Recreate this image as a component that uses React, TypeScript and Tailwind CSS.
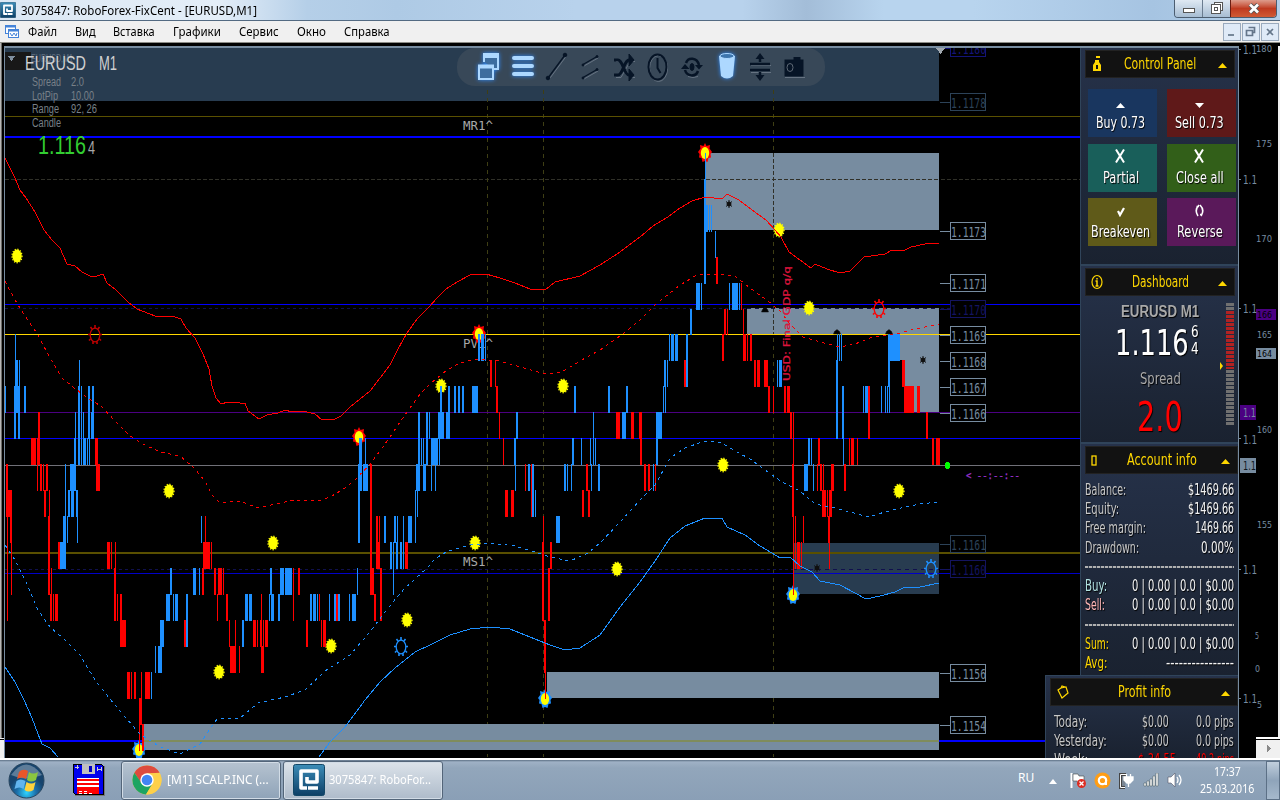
import { useLayoutEffect, useRef, useState } from 'react';
import type { ReactNode } from 'react';

type Candle = [x: number, w: number, top: number, bottom: number];
type Point = [number, number];

const BLUE = '#1e90ff';
const RED = '#ff0000';
const STEEL = '#778ca0';
const NAVY = '#10104e';
const DARK = '#283c50';

// top / bottom are the last two digits of the price (1.11xx)
const UP: Candle[] = [
  [5, 1, 67, 66], [15, 1, 69, 65], [14, 2, 67, 65], [16, 2, 68, 66], [18, 2, 67, 65], [19, 1, 68, 66], [24, 2, 67, 66],
  [78, 2, 67, 64], [79, 1, 68, 67], [81, 1, 67, 64], [88, 2, 67, 65], [92, 2, 67, 65], [91, 1, 66, 65], [75, 1, 66, 65],
  [74, 2, 65, 64], [83, 1, 66, 64], [83, 3, 65, 64], [87, 1, 65, 64], [89, 1, 65, 64], [65, 1, 64, 62], [70, 6, 64, 63],
  [68, 2, 63, 62], [71, 3, 63, 62], [76, 2, 63, 62], [63, 3, 62, 61], [60, 6, 61, 60], [67, 1, 62, 61], [77, 1, 62, 61],
  [151, 1, 56, 55], [155, 1, 57, 56], [158, 4, 57, 56], [160, 4, 58, 57], [166, 4, 59, 58], [170, 2, 60, 59],
  [173, 1, 59, 58], [175, 3, 59, 58], [186, 2, 59, 57], [193, 3, 60, 59], [199, 1, 60, 59], [201, 1, 62, 61],
  [242, 2, 58, 57], [245, 3, 59, 58], [249, 3, 59, 58], [270, 2, 60, 59], [269, 1, 59, 58], [271, 3, 59, 58],
  [278, 2, 59, 58], [280, 4, 60, 59], [285, 7, 60, 59], [310, 2, 59, 58], [313, 3, 59, 58], [317, 1, 59, 58],
  [329, 1, 59, 58], [334, 2, 59, 58], [338, 2, 59, 58], [349, 1, 59, 58], [352, 4, 59, 58], [357, 1, 60, 59],
  [358, 2, 64, 61], [359, 3, 65, 64], [365, 1, 65, 64], [358, 4, 64, 63], [363, 5, 64, 63], [384, 2, 62, 61],
  [394, 2, 62, 61], [397, 1, 62, 61], [403, 1, 62, 60], [408, 4, 62, 61], [390, 2, 61, 60], [393, 1, 61, 59],
  [396, 2, 61, 60], [400, 2, 61, 60], [415, 1, 63, 61], [417, 1, 63, 62], [416, 4, 64, 63], [418, 2, 66, 64],
  [421, 1, 65, 64], [423, 1, 65, 64], [423, 3, 64, 63], [426, 2, 66, 64], [429, 1, 66, 65], [431, 7, 65, 64],
  [431, 1, 64, 63], [435, 1, 64, 63], [439, 1, 65, 64], [438, 6, 66, 65], [440, 2, 67, 66], [446, 4, 66, 65],
  [448, 2, 67, 66], [454, 2, 67, 66], [458, 2, 67, 66], [462, 2, 67, 66], [472, 6, 67, 66], [478, 2, 69, 68],
  [481, 3, 69, 68], [485, 1, 69, 68], [516, 2, 66, 65], [514, 2, 65, 64], [515, 1, 64, 63], [528, 2, 64, 63],
  [532, 2, 64, 62], [535, 1, 63, 62], [556, 4, 62, 61], [564, 2, 64, 63], [567, 1, 64, 63], [571, 1, 64, 63],
  [572, 2, 65, 64], [574, 2, 67, 66], [581, 1, 65, 64], [590, 1, 65, 64], [591, 1, 64, 63], [593, 1, 66, 64],
  [595, 1, 65, 64], [598, 2, 64, 63], [608, 2, 67, 66], [622, 4, 66, 65], [626, 2, 67, 66], [653, 1, 64, 63],
  [656, 6, 66, 65], [656, 2, 65, 64], [663, 1, 67, 66], [665, 1, 67, 66], [664, 2, 68, 67], [667, 1, 68, 67],
  [669, 1, 69, 68], [671, 3, 69, 68], [675, 3, 69, 68], [686, 2, 69, 67], [690, 2, 70, 69], [696, 4, 71, 70],
  [701, 1, 71, 70], [704, 2, 75, 71], [705, 1, 76, 75], [706, 2, 74, 73], [709, 1, 74, 73], [711, 1, 74, 73],
  [715, 1, 73, 72], [729, 1, 71, 70], [732, 6, 71, 70], [739, 1, 71, 70], [777, 1, 68, 67], [779, 3, 68, 67],
  [804, 4, 64, 63], [808, 2, 65, 64], [811, 1, 65, 64], [813, 1, 64, 63], [836, 2, 68, 65], [837, 1, 69, 68],
  [839, 1, 69, 68], [841, 1, 69, 68], [842, 2, 67, 65], [843, 1, 65, 64], [863, 1, 67, 66], [865, 3, 67, 66],
  [881, 1, 67, 66], [885, 1, 67, 66], [887, 1, 67, 66], [889, 1, 67, 66], [888, 2, 68, 67], [888, 12, 69, 68],
];

const DOWN: Candle[] = [
  [31, 5, 65, 64], [38, 2, 66, 64], [37, 1, 65, 63], [40, 2, 64, 63], [43, 1, 64, 63], [46, 2, 64, 63], [44, 2, 63, 62],
  [49, 1, 63, 62], [95, 3, 65, 64], [96, 4, 64, 63], [6, 2, 64, 62], [8, 4, 63, 62], [7, 1, 62, 58], [10, 2, 62, 61],
  [11, 1, 61, 59], [48, 2, 62, 59], [51, 1, 60, 59], [50, 2, 59, 58], [53, 1, 59, 58], [55, 3, 59, 58], [58, 2, 61, 60],
  [107, 3, 61, 60], [111, 1, 61, 60], [115, 1, 61, 60], [114, 2, 60, 58], [117, 1, 59, 58], [120, 2, 59, 58],
  [120, 6, 58, 57], [127, 3, 56, 55], [131, 1, 56, 55], [134, 2, 56, 55], [141, 1, 56, 55], [145, 5, 56, 55],
  [139, 3, 55, 54], [139, 1, 54, 53], [142, 2, 54, 53], [184, 2, 58, 57], [205, 1, 62, 61], [203, 7, 61, 60],
  [211, 1, 61, 60], [202, 2, 60, 59], [214, 2, 60, 59], [218, 4, 60, 59], [223, 1, 60, 59], [217, 1, 59, 58],
  [226, 2, 59, 58], [229, 1, 58, 57], [235, 1, 58, 57], [230, 6, 57, 56], [239, 1, 57, 56], [253, 3, 58, 57],
  [257, 1, 58, 57], [260, 2, 58, 57], [261, 1, 59, 58], [263, 1, 58, 57], [265, 3, 58, 57], [261, 3, 57, 56],
  [293, 1, 60, 58], [298, 2, 60, 59], [306, 2, 58, 57], [319, 1, 59, 58], [321, 1, 58, 57], [323, 3, 58, 57],
  [336, 2, 59, 58], [370, 2, 64, 59], [372, 2, 60, 59], [374, 2, 59, 58], [376, 2, 62, 60], [379, 1, 62, 61],
  [378, 2, 61, 60], [380, 2, 60, 58], [405, 3, 61, 60], [490, 2, 68, 67], [495, 1, 68, 67], [496, 2, 67, 66],
  [499, 1, 66, 65], [503, 1, 65, 64], [505, 3, 63, 62], [511, 3, 63, 62], [525, 1, 64, 63], [531, 1, 64, 62],
  [543, 1, 62, 61], [542, 2, 61, 58], [544, 2, 58, 56], [545, 1, 56, 55], [550, 2, 61, 60], [548, 2, 60, 58],
  [586, 2, 64, 63], [582, 2, 63, 62], [588, 2, 63, 62], [616, 4, 66, 65], [631, 3, 66, 65], [639, 3, 66, 65],
  [640, 2, 65, 64], [644, 2, 64, 63], [648, 2, 64, 63], [655, 1, 64, 63], [684, 2, 68, 67], [716, 2, 72, 71],
  [741, 1, 71, 70], [724, 2, 70, 69], [727, 1, 70, 69], [722, 2, 69, 68], [743, 1, 70, 69], [743, 3, 69, 68],
  [747, 1, 69, 68], [750, 2, 69, 68], [754, 2, 68, 67], [757, 3, 68, 67], [764, 4, 68, 67], [768, 2, 67, 66],
  [773, 1, 67, 66], [784, 2, 67, 66], [787, 3, 67, 66], [790, 2, 66, 65], [793, 1, 66, 64], [792, 2, 64, 62],
  [793, 1, 62, 59], [795, 1, 62, 60], [797, 3, 61, 60], [801, 1, 61, 60], [803, 1, 62, 61], [817, 1, 64, 63],
  [818, 2, 65, 64], [820, 2, 64, 63], [823, 1, 64, 63], [822, 4, 63, 62], [827, 1, 63, 62], [829, 3, 63, 62],
  [831, 3, 64, 63], [828, 2, 62, 61], [829, 1, 61, 60], [868, 2, 67, 65], [844, 2, 64, 63], [849, 1, 65, 64],
  [851, 3, 65, 64], [857, 1, 65, 64], [902, 2, 68, 67], [904, 1, 68, 67], [904, 10, 67, 66], [917, 3, 67, 66],
  [926, 2, 66, 65], [932, 2, 65, 64], [936, 4, 65, 64],
];

const UPPER = '5,158 10,168 15,178 20,190 26,198 35,212 44,230 52,240 60,248 67,264 75,266 82,272 90,276 97,276 103,274 107,283 116,290 128,302 137,309 155,316 175,317 181,319 186,328 195,338 203,354 209,369 212,386 216,398 221,404 228,402 240,403 245,403 248,411 259,419 267,415 278,413 285,410 292,412 303,411 315,414 322,420 335,419 341,416 350,407 370,391 380,378 390,365 398,349 407,333 417,319 430,306 437,298 446,289 457,282 470,275 486,274 500,278 515,283 530,289 545,290 555,282 580,276 600,265 620,252 640,237 653,226 668,217 680,208 692,201 705,197 722,199 727,194 739,200 752,210 766,220 775,230 781,237 789,252 800,260 811,268 815,264 827,269 840,273 850,271 864,257 885,254 892,250 905,250 911,247 925,244 939,243';
const UPPER_MID = '5,281 15,300 25,316 38,335 50,358 62,378 73,387 85,396 102,407 115,421 130,436 145,445 160,452 180,456 193,467 205,481 212,495 220,503 240,501 258,508 275,504 295,500 320,501 332,496 345,488 356,479 371,463 383,447 392,434 400,422 410,408 420,394 430,384 447,370 460,363 475,359 500,361 520,367 545,374 562,372 580,361 600,350 620,336 640,320 655,305 680,285 697,275 715,274 735,276 750,288 768,301 780,311 790,324 803,337 820,342 840,347 855,344 870,338 900,333 915,329 939,324';
const LOWER_MID = '5,545 15,560 25,580 38,610 50,627 65,640 80,655 95,680 110,699 125,717 140,734 160,747 180,754 200,744 210,729 217,719 240,718 258,703 285,697 305,690 325,671 350,655 370,632 385,612 397,597 405,588 415,579 427,568 436,558 448,551 470,545 490,543 515,546 535,552 550,557 570,561 588,553 600,543 620,522 640,500 655,485 670,458 685,448 705,441 722,443 735,451 750,459 765,470 782,482 800,491 815,504 835,508 850,512 868,517 885,512 905,507 920,504 939,502';
const LOWER_LEFT = '5,667 15,682 24,700 32,718 38,734 42,744 50,748 58,757';
const LOWER = '319,757 330,742 345,727 365,700 380,682 395,668 415,652 430,645 450,635 470,629 490,627 510,629 530,637 550,645 565,650 580,648 600,635 620,607 640,582 655,561 670,538 685,526 705,518 722,518 727,527 745,535 760,546 772,553 780,558 790,557 800,566 812,572 820,581 840,585 855,593 866,599 880,596 895,592 903,588 920,587 939,583';

const DOTS: Point[] = [
  [17, 256], [169, 491], [273, 543], [219, 672], [331, 646], [407, 620], [441, 386], [563, 386], [617, 569],
  [475, 543], [723, 465], [779, 230], [809, 308], [899, 491],
];

const LEVELS = [
  { y: 48, text: '1.1180', color: '#141478' },
  { y: 102, text: '1.1178', color: '#2c4258' },
  { y: 231, text: '1.1173', color: STEEL },
  { y: 283, text: '1.1171', color: STEEL },
  { y: 309, text: '1.1170', color: '#141460' },
  { y: 335, text: '1.1169', color: STEEL },
  { y: 361, text: '1.1168', color: STEEL },
  { y: 387, text: '1.1167', color: STEEL },
  { y: 413, text: '1.1166', color: STEEL },
  { y: 544, text: '1.1161', color: '#2c4258' },
  { y: 569, text: '1.1160', color: '#141460' },
  { y: 673, text: '1.1156', color: STEEL },
  { y: 725, text: '1.1154', color: STEEL },
];

const priceY = (p: number) => Math.round(308.5 + (70 - p) * 25.98);

// squeezes its text to an exact width, like the narrow font of the indicator
function Fit({ w, className = '', children }: { w: number; className?: string; children: ReactNode }) {
  const inner = useRef<HTMLSpanElement>(null);
  const [scale, setScale] = useState(1);
  useLayoutEffect(() => {
    if (inner.current) setScale(w / inner.current.offsetWidth);
  }, [w]);
  return (
    <span className={`inline-flex shrink-0 ${className}`} style={{ width: w }}>
      <span ref={inner} className="shrink-0 whitespace-pre origin-left" style={{ transform: `scaleX(${scale})` }}>
        {children}
      </span>
    </span>
  );
}

function Candles({ data, color }: { data: Candle[]; color: string }) {
  return (
    <g fill={color}>
      {data.map(([x, w, top, bottom], i) => (
        <rect key={i} x={x} y={priceY(top)} width={w} height={priceY(bottom) - priceY(top) + 1} />
      ))}
    </g>
  );
}

function Sun({ x, y, color }: { x: number; y: number; color: string }) {
  return (
    <g transform={`translate(${x} ${y})`} stroke={color} fill="none" shapeRendering="auto">
      <ellipse rx="4.8" ry="6.8" strokeWidth="1.3" />
      <path strokeWidth="1.6" d="M0-7v-3M-2 6.500v2.500M2 6.500v2.500M-5-.5h-2M5-.5h2M-3-6l-1.500-2M3-6l1.500-2M-4.500 4l-1.500 1.500M4.500 4l1.500 1.500" />
    </g>
  );
}

// yellow dot with a spiked halo, marks a swing high or low
function Swing({ x, y, color }: { x: number; y: number; color: string }) {
  return (
    <g shapeRendering="auto">
      <path transform={`translate(${x} ${y})`} fill={color} d="M0-10l1.500 3 3.500-1-.5 3.500 2.500 3.500-1.500 2 .5 3.500-2.500.5-1 4-2.500-1-2.500 1-1-4-2.500-.5.5-3.500-1.500-2 2.500-3.500-.5-3.500 3.500 1z" />
      <ellipse cx={x} cy={y} rx="4.200" ry="6" fill="#ffff00" />
    </g>
  );
}

function Dot({ x, y }: { x: number; y: number }) {
  return (
    <g transform={`translate(${x} ${y})`} shapeRendering="auto">
      <ellipse rx="4.7" ry="6.5" fill="#ffff00" />
      <ellipse rx="5" ry="6.8" fill="none" stroke="#ffff00" strokeWidth="1.3" strokeDasharray="1.2 1.6" />
    </g>
  );
}

function Star({ x, y, half }: { x: number; y: number; half?: boolean }) {
  return (
    <g transform={`translate(${x} ${y})`} stroke="#111" fill="#000" shapeRendering="auto">
      {half ? <path strokeWidth=".5" d="M-3.500 2L-2.500-.5 0-2.500 2.500-.5 3.500 2z" /> : <><circle r="2" /><path d="M0-4v8M-3-2.500l6 5M3-2.500l-6 5" /></>}
    </g>
  );
}

function ToolIcons() {
  return (
    <g shapeRendering="auto" fill="none">
      <rect x="457" y="48" width="368" height="38" rx="18" fill="#384858" />
      <g style={{ filter: 'drop-shadow(0 0 2px #2f8dff)' }} stroke="#add8ff">
        <path strokeWidth="2" d="M484 62v-7h14v14h-4" fill="#3d6d9f" />
        <path strokeWidth="5" d="M483 55.5h16" />
        <path strokeWidth="2" d="M479 66h14v13h-14z" fill="#3d6d9f" />
        <path strokeWidth="4" d="M478 66.5h16" />
        <path strokeWidth="4" strokeLinecap="round" d="M514 58h18M514 66h18M514 74h18" />
      </g>
      <g stroke="#667382" transform="translate(1 1.5)" strokeWidth="1">
        <path d="M548 78l17-23M583 64.5l14-8M583 77.5l14-8M615 60h5l9 16h5M615 76h5l9-16h5" />
        <ellipse cx="657.500" cy="67" rx="9" ry="13" />
        <path d="M750 64h20M750 71h20M784 76h20M687 75q5 2 10 0" />
      </g>
      <g stroke="#061426" fill="#061426">
        <path d="M548 78l17-23M583 64.500l14-8M583 77.500l14-8" strokeWidth="1.400" />
        <circle cx="548" cy="78" r="1.800" /><circle cx="565" cy="55" r="1.800" />
        <circle cx="583" cy="65" r="1" /><circle cx="597" cy="56.500" r="1" /><circle cx="583" cy="78" r="1" /><circle cx="597" cy="69.500" r="1" />
        <path fill="none" strokeWidth="3" d="M614 60h4c5 0 6 15 11 15h3M614 75h4c5 0 6-15 11-15h3" />
        <path d="M629 54l5 6-5 6zM629 69l5 6-5 6z" />
        <ellipse cx="657.500" cy="67" rx="9" ry="12.500" fill="none" strokeWidth="2" />
        <path fill="none" strokeWidth="2" d="M657.500 58v10l3 5" />
        <path fill="none" strokeWidth="2.500" d="M686 63c2-6 11-6 13 2M685 70c2 7 11 7 13 1" />
        <path strokeWidth="0" d="M695 65h8l-4 4.500zM681 69l4-5 4.500 5z" />
        <ellipse cx="692" cy="67" rx="2" ry="3.500" />
        <path strokeWidth="2.500" d="M750 64h20M750 70h20M760 57v5M760 72v5" />
        <path strokeWidth="0" d="M755.500 59l4.500-6 4.500 6zM755.500 75l4.500 6 4.500-6z" />
        <rect x="785" y="60" width="18" height="16" /><rect x="794" y="57.500" width="6" height="4" />
        <ellipse cx="790" cy="67.500" rx="3" ry="4" fill="#061426" stroke="#5d6875" />
      </g>
      <g style={{ filter: 'drop-shadow(0 0 2px #2f8dff)' }}>
        <path d="M719 56h16l-2 20q-6 5-12 0z" fill="#add8ff" />
        <ellipse cx="727" cy="56" rx="7" ry="2.500" fill="#3d75ad" stroke="#add8ff" />
      </g>
    </g>
  );
}

function Chart() {
  return (
    <svg width="1080" height="715" viewBox="0 43 1080 715" className="shrink-0 block" shapeRendering="crispEdges">
      <rect y="43" width="1080" height="715" fill="#000" />
      <rect y="43" width="1" height="715" fill="#b8b8b8" /><rect x="1" y="43" width="1" height="715" fill="#6c6c68" />
      <rect x="0" y="738" width="4" height="20" fill="#f0f0f0" /><rect x="0" y="739" width="4" height="1" fill="#000" />
      <rect x="4" y="46" width="1" height="712" fill={STEEL} />
      <rect x="4" y="46" width="1076" height="2" fill={STEEL} />
      <rect x="5" y="48" width="934" height="53" fill={DARK} />

      <path d="M5 179.500H1080" stroke="#303028" strokeDasharray="4 2" />
      <path d="M5 308.500H950M5 569.500H950" stroke={NAVY} strokeDasharray="3 3" />
      <path d="M487.500 90V757M543.500 90V757M773.500 90V757" stroke="#3e3e14" strokeDasharray="4 4" />
      <g fill={STEEL}>
        <rect x="706" y="153" width="233" height="77" />
        <rect x="747" y="308" width="192" height="26" />
        <rect x="900" y="334" width="39" height="26" />
        <rect x="905" y="360" width="34" height="52" />
        <rect x="547" y="672" width="392" height="26" />
        <rect x="143" y="724" width="796" height="26" />
      </g>
      <rect x="793" y="543" width="146" height="51" fill={DARK} />
      <path d="M706 179.500H939M773.500 153V230M773.500 308V334" stroke="#303028" strokeDasharray="4 2" />
      <path d="M747 308.500H939M793 569.500H939" stroke={NAVY} strokeDasharray="4 4" />

      <path d="M5 116.500H1080" stroke="#5a5000" />
      <path d="M5 553H1080" stroke="#5a5000" strokeWidth="2" />
      <path d="M5 137H1080" stroke="#0000ff" strokeWidth="2" />
      <path d="M5 741H1046" stroke="#0000ff" strokeWidth="2" />
      <path d="M143 741H939" stroke="#7f8c5c" strokeWidth="2" />
      <path d="M5 304.500H1080M5 438.500H1080" stroke="#0000ff" />
      <path d="M5 573.500H1080" stroke="#0000c8" />
      <path d="M5 412.500H1080" stroke="#4b0082" />
      <path d="M5 334.500H1080" stroke="#ffd700" />
      <path d="M5 465.500H1080" stroke="#707078" />

      <g fontFamily="'DejaVu Sans Mono', monospace" fontSize="13" fill="#a8a8a8">
        <text x="463" y="130" textLength="30" lengthAdjust="spacingAndGlyphs">MR1^</text>
        <text x="463" y="348" textLength="30" lengthAdjust="spacingAndGlyphs">PV1^</text>
        <text x="463" y="566" textLength="30" lengthAdjust="spacingAndGlyphs">MS1^</text>
      </g>

      {[[359, 437], [479, 334], [705, 153]].map(([x, y]) => <Swing key={x} x={x} y={y} color={RED} />)}
      {[[139, 750], [545, 699], [793, 595]].map(([x, y]) => <Swing key={x} x={x} y={y} color={BLUE} />)}
      {DOTS.map(([x, y]) => <Dot key={`${x}-${y}`} x={x} y={y} />)}

      <Candles data={UP} color={BLUE} />
      <Candles data={DOWN} color={RED} />
      <g fill="none">
        <polyline points={UPPER} stroke={RED} />
        <polyline points={UPPER_MID} stroke={RED} strokeDasharray="3 4" />
        <polyline points={LOWER_MID} stroke={BLUE} strokeDasharray="3 4" />
        <polyline points={LOWER_LEFT} stroke={BLUE} />
        <polyline points={LOWER} stroke={BLUE} />
      </g>

      <Sun x={95} y={335} color="#c00000" />
      <Sun x={879} y={309} color={RED} />
      <Sun x={401} y={647} color={BLUE} />
      <Sun x={931} y={569} color={BLUE} />
      <Star x={729} y={204} />
      <Star x={923} y={360} />
      <Star x={817} y={568} />
      <Star x={765} y={310} half />
      <Star x={837} y={332} half />
      <Star x={889} y={332} half />

      <text transform="translate(790 381) rotate(-90)" fontFamily="'DejaVu Sans', sans-serif" fontSize="9" fill="#dc143c" stroke="#dc143c" strokeWidth=".3" textLength="115" lengthAdjust="spacingAndGlyphs">USD: Final GDP q/q</text>
      <ellipse cx="947.500" cy="465.500" rx="2.500" ry="3.500" fill="#00ff00" />
      <text x="966" y="479" fontFamily="'DejaVu Sans Mono', monospace" fontSize="11" fill="#9932cc" stroke="#9932cc" strokeWidth=".3" textLength="54" lengthAdjust="spacingAndGlyphs">&lt; --:--:--</text>

      {LEVELS.map(({ y, text, color }) => (
        <g key={y}>
          <path d={`M940 ${y + 0.5}h10`} stroke={color} />
          <rect x="950.500" y={y - 8.5} width="35" height="17" fill="#000" stroke={color} />
          <text x="951" y={y + 6} fill={color} fontFamily="'DejaVu Sans Mono', monospace" fontSize="14.500" textLength="35" lengthAdjust="spacingAndGlyphs">{text}</text>
        </g>
      ))}
      <rect x="940" y="38" width="60" height="8" fill="#000" /><rect x="940" y="46" width="60" height="2" fill={STEEL} />
      <path d="M936 48h9l-4.500 6z" fill="#a0a8b0" />

      <rect x="5" y="52" width="26" height="18" fill="#181818" />
      <path d="M8 56h7l-3.500 5z" fill="#8090a0" />
      <g fontFamily="'Liberation Sans', sans-serif" shapeRendering="auto">
        <text x="31" y="62" fontSize="11" fill="#607080" textLength="42" lengthAdjust="spacingAndGlyphs">EURUSD,M1</text>
        <g fontSize="21" fill="#d0d0d0">
          <text x="25" y="70" textLength="61" lengthAdjust="spacingAndGlyphs">EURUSD</text>
          <text x="99" y="70" textLength="18" lengthAdjust="spacingAndGlyphs">M1</text>
        </g>
        <g fontSize="12.500" fill="#788088">
          <text x="32" y="86" textLength="29" lengthAdjust="spacingAndGlyphs">Spread</text>
          <text x="71" y="86" textLength="13" lengthAdjust="spacingAndGlyphs">2.0</text>
          <text x="32" y="100" textLength="26" lengthAdjust="spacingAndGlyphs">LotPip</text>
          <text x="71" y="100" textLength="23" lengthAdjust="spacingAndGlyphs">10.00</text>
          <text x="32" y="113" textLength="27" lengthAdjust="spacingAndGlyphs">Range</text>
          <text x="71" y="113" textLength="26" lengthAdjust="spacingAndGlyphs">92, 26</text>
          <text x="32" y="127" textLength="29" lengthAdjust="spacingAndGlyphs">Candle</text>
        </g>
        <text x="38" y="154" fontSize="26" fill="#32cd32" textLength="48" lengthAdjust="spacingAndGlyphs">1.116</text>
        <text x="88" y="154" fontSize="19" fill="#a8a8a8" textLength="7" lengthAdjust="spacingAndGlyphs">4</text>
      </g>
      <ToolIcons />
    </svg>
  );
}

function Axis() {
  return (
    <svg width="42" height="715" viewBox="1238 43 42 715" className="shrink-0 block" shapeRendering="crispEdges">
      <rect x="1238" y="43" width="42" height="715" fill="#000" />
      <rect x="1238" y="46" width="1" height="712" fill={STEEL} />
      <rect x="1278" y="46" width="2" height="692" fill="#f0f0f0" />
      <path d="M1239 49.500h2M1239 179.500h2M1239 308.500h2M1239 438.500h2M1239 569.500h2M1239 698.500h2" stroke={STEEL} />
      <rect x="1240" y="405" width="16" height="15" fill="#4b0082" />
      <rect x="1240" y="458" width="16" height="15" fill={STEEL} />
      <rect x="1256" y="309" width="20" height="11" fill="#4b0082" />
      <rect x="1256" y="348" width="20" height="11" fill={STEEL} />
      <g fontFamily="'DejaVu Sans', sans-serif" fontSize="12.500" fill={STEEL}>
        {[54, 184, 313, 444, 574, 703].map(y => <text key={y} x="1243" y={y} textLength="14" lengthAdjust="spacingAndGlyphs">1.1</text>)}
        <text x="1243" y="417" textLength="13" lengthAdjust="spacingAndGlyphs">1.1</text>
        <text x="1243" y="470" fill="#101820" textLength="13" lengthAdjust="spacingAndGlyphs">1.1</text>
      </g>
      <g fontFamily="'DejaVu Sans', sans-serif" fontSize="9.500" fill={STEEL}>
        <text x="1256" y="52" textLength="16" lengthAdjust="spacingAndGlyphs">180</text>
        <text x="1256" y="147" textLength="16" lengthAdjust="spacingAndGlyphs">175</text>
        <text x="1256" y="242" textLength="16" lengthAdjust="spacingAndGlyphs">170</text>
        <text x="1257" y="318" fill="#000" textLength="15" lengthAdjust="spacingAndGlyphs">166</text>
        <text x="1257" y="338" textLength="15" lengthAdjust="spacingAndGlyphs">165</text>
        <text x="1257" y="357" fill="#000" textLength="15" lengthAdjust="spacingAndGlyphs">164</text>
        <text x="1257" y="433" textLength="15" lengthAdjust="spacingAndGlyphs">160</text>
        <text x="1257" y="528" textLength="15" lengthAdjust="spacingAndGlyphs">155</text>
        <text x="1255" y="639" fontSize="8" textLength="4" lengthAdjust="spacingAndGlyphs">5</text>
        <text x="1255" y="672" fontSize="8" textLength="5" lengthAdjust="spacingAndGlyphs">0</text>
        <text x="1257" y="708" textLength="5" lengthAdjust="spacingAndGlyphs">5</text>
      </g>
      <rect x="1256" y="737" width="24" height="2" fill="#fff" />
      <rect x="1256" y="740" width="24" height="18" fill="#f0f0f0" />
      <path d="M1267 745l3.500 3.500-3.500 3.500z" fill="#888" />
    </svg>
  );
}

function PanelHead({ icon, title, w, className = '' }: { icon: ReactNode; title: string; w: number; className?: string }) {
  return (
    <div className={`h-[28px] shrink-0 bg-[#121212] border border-[#222] flex items-center text-[#ffd700] ${className}`}>
      <span className="w-[22px] flex justify-center">{icon}</span>
      <span className="flex-1 flex justify-center pr-[6px]"><Fit w={w} className="text-[16px] leading-[20px] mb-[1px]">{title}</Fit></span>
      <svg width="9" height="5" className="mr-[7px] mt-[3px]"><path d="M0 5l4.500-5L9 5z" fill="#ffd700" /></svg>
    </div>
  );
}

function ActionButton({ className, icon, label, w }: { className: string; icon: ReactNode; label: string; w: number }) {
  return (
    <button className={`w-[69px] h-[48px] pr-[4px] flex flex-col items-center text-white [text-shadow:1px_1px_1px_#000] ${className}`}>
      <span className="h-[24px] flex items-end pb-[5px]">{icon}</span>
      <Fit w={w} className="text-[16px] leading-[20px]">{label}</Fit>
    </button>
  );
}

function Row({ label, lw, value, vw, className = 'text-[#c8c8c8]' }: { label: string; lw: number; value: string; vw: number; className?: string }) {
  return (
    <div className="flex justify-between h-[19.200px] items-center text-[15px] leading-[19px] [text-shadow:1px_1px_1px_#000]">
      <Fit w={lw} className={className}>{label}</Fit>
      <Fit w={vw} className="text-[#f4f4f4]">{value}</Fit>
    </div>
  );
}

const Rule = () => (
  <div className="h-[19.200px] flex items-center">
    <div className="flex-1 h-[2px] bg-[repeating-linear-gradient(90deg,#b0b0b0_0,#b0b0b0_3px,#3c4656_3px,#3c4656_4px)]" />
  </div>
);

function Gauge() {
  return (
    <div className="w-[8px] h-[122px] flex flex-col gap-[1px]">
      {Array.from({ length: 31 }, (_, i) => (
        <div key={i} className={`flex-1 ${i < 2 || i > 16 ? 'bg-[#707070]' : 'bg-[#b22222]'}`} />
      ))}
    </div>
  );
}

function SidePanel() {
  return (
    <div className="w-[158px] h-[715px] shrink-0 bg-black font-['DejaVu_Sans_Condensed','DejaVu_Sans',sans-serif] relative z-10">
      <div className="h-[3px]" />
      <div className="h-[2px] bg-[#778ca0]" />
      <div className="h-[216px] border-l border-[#30445a] bg-gradient-to-b from-[#26324a] to-[#1a2230] pt-[2px]">
        <PanelHead className="ml-[4px] w-[150px]" w={72} title="Control Panel" icon={
          <svg width="8" height="16" viewBox="0 0 8 16"><rect x="3" width="4" height="2" fill="currentColor" /><path d="M2 4h4v2l2 3v6H0V9l2-3z" fill="currentColor" /><path d="M3 9h2v4H3z" fill="#121212" /></svg>
        } />
        <div className="grid grid-cols-[69px_69px] gap-x-[10px] gap-y-[6.500px] pl-[7px] pt-[11px]">
          <ActionButton className="bg-[#19365f]" w={49} label="Buy 0.73" icon={<svg width="9" height="5"><path d="M0 5l4.500-5L9 5z" fill="#fff" /></svg>} />
          <ActionButton className="bg-[#5f1919]" w={49} label="Sell 0.73" icon={<svg width="9" height="5"><path d="M0 0h9L4.500 5z" fill="#fff" /></svg>} />
          <ActionButton className="bg-[#195f5a]" w={36} label="Partial" icon={<svg width="11" height="14"><path d="M1 .5l8 13M9 .5l-8 13" stroke="#fff" strokeWidth="2" /></svg>} />
          <ActionButton className="bg-[#325f19]" w={48} label="Close all" icon={<svg width="11" height="14"><path d="M1 .5l8 13M9 .5l-8 13" stroke="#fff" strokeWidth="2" /></svg>} />
          <ActionButton className="bg-[#5f5a19]" w={59} label="Breakeven" icon={<svg width="8" height="10"><path d="M1 4l2 4 4-7" stroke="#fff" strokeWidth="2.200" fill="none" /></svg>} />
          <ActionButton className="bg-[#5a195a]" w={46} label="Reverse" icon={<svg width="9" height="13"><path d="M4 1Q-1 6 3 12M5 1q5 5 1 11M1.500 2.500h2.500M5 10.500h2.500" stroke="#fff" strokeWidth="1.600" fill="none" /></svg>} />
        </div>
      </div>

      <div className="h-[178px] border-l border-t-2 border-[#30445a] bg-gradient-to-b from-[#26324a] to-[#1a2230] pt-[2px]">
        <PanelHead className="ml-[4px] w-[150px]" w={57} title="Dashboard" icon={
          <svg width="12" height="16" viewBox="0 0 12 16"><ellipse cx="6" cy="8" rx="5" ry="6.500" fill="none" stroke="currentColor" strokeWidth="1.200" /><path d="M6 4v1.500M4.500 7H6v5M4.500 12h3" stroke="currentColor" strokeWidth="1.500" fill="none" /></svg>
        } />
        <div className="flex [text-shadow:1px_1px_1px_#000]">
          <div className="w-[136px] pl-[22px] flex flex-col items-center">
            <Fit w={78} className="mt-[6px] text-[16px] leading-[20px] font-bold text-[#a9a9a9] font-['Liberation_Sans',sans-serif]">EURUSD M1</Fit>
            <div className="flex h-[42px] items-center text-white mr-[6px]">
              <Fit w={74} className="text-[36px] leading-[42px]">1.116</Fit>
              <span className="flex flex-col ml-[2px] mb-[4px]">
                <Fit w={8} className="text-[15px] leading-[17px]">6</Fit>
                <Fit w={8} className="text-[15px] leading-[17px]">4</Fit>
              </span>
            </div>
            <Fit w={41} className="mt-[5px] text-[16px] leading-[20px] text-[#a9a9a9]">Spread</Fit>
            <Fit w={46} className="mt-[3px] text-[41px] leading-[50px] text-[#ff0000]">2.0</Fit>
          </div>
          <svg width="4" height="8" className="mt-[66px] mx-[2px]"><path d="M1 0l3 4-3 4z" fill="#ffd700" /></svg>
          <div className="pt-[7px] pl-[1px]"><Gauge /></div>
        </div>
      </div>

      <div className="h-[233px] border-l border-t-2 border-[#30445a] bg-gradient-to-b from-[#26324a] to-[#1a2230] pt-[2px]">
        <PanelHead className="ml-[4px] w-[153px]" w={70} title="Account info" icon={
          <svg width="6" height="11" className="mr-[6px]"><rect x="1" y="1" width="4" height="9" fill="none" stroke="currentColor" strokeWidth="1.300" /></svg>
        } />
        <div className="pl-[4px] pr-[4px] pt-[7px]">
          <Row label="Balance:" lw={41} value="$1469.66" vw={46} />
          <Row label="Equity:" lw={34} value="$1469.66" vw={46} />
          <Row label="Free margin:" lw={61} value="1469.66" vw={39} />
          <Row label="Drawdown:" lw={54} value="0.00%" vw={33} />
          <Rule />
          <Row label="Buy:" lw={22} value="0 | 0.00 | 0.0 | $0.00" vw={102} className="text-[#b0e0e0]" />
          <Row label="Sell:" lw={20} value="0 | 0.00 | 0.0 | $0.00" vw={102} className="text-[#ffb6b6]" />
          <Rule />
          <Row label="Sum:" lw={24} value="0 | 0.00 | 0.0 | $0.00" vw={102} className="text-[#ffd700]" />
          <Row label="Avg:" lw={22} value="----------------" vw={68} className="text-[#ffd700]" />
        </div>
      </div>

      <div className="-ml-[35px] h-[83px] overflow-hidden border-l border-t border-[#30445a] bg-gradient-to-b from-[#26324a] to-[#1a2230] pt-[2px]">
        <PanelHead className="ml-[4px] w-[188px]" w={53} title="Profit info" icon={
          <svg width="13" height="14"><path d="M2 5l4 8 6-5-2-6-5 1zM5 3l1-2 3 1" fill="none" stroke="currentColor" strokeWidth="1.200" /></svg>
        } />
        <div className="pl-[8px] pr-[4px] pt-[7px] text-[15px] leading-[19px] [text-shadow:1px_1px_1px_#000] text-[#c8c8c8]">
          {[['Today:', 33], ['Yesterday:', 53]].map(([label, w]) => (
            <div key={label} className="flex h-[19.200px] items-center">
              <span className="w-[88px] flex"><Fit w={w as number}>{label}</Fit></span>
              <Fit w={27}>$0.00</Fit>
              <Fit w={38} className="ml-auto">0.0 pips</Fit>
            </div>
          ))}
          <div className="flex h-[19.200px] items-center text-[#ff0000]">
            <span className="w-[84px] flex"><Fit w={34} className="text-[#c8c8c8]">Week:</Fit></span>
            <Fit w={38}>$-34.55</Fit>
            <Fit w={41} className="ml-auto">-49.2 pips</Fit>
          </div>
        </div>
      </div>
    </div>
  );
}

function TerminalLogo({ className }: { className: string }) {
  return (
    <svg viewBox="0 0 32 32" className={className}>
      <defs><linearGradient id="logo" x2="0" y2="1"><stop stopColor="#3c8db8" /><stop offset="1" stopColor="#0d3f66" /></linearGradient></defs>
      <rect x=".5" y=".5" width="31" height="31" rx="2" fill="url(#logo)" stroke="#124767" />
      <path d="M14 24H8V7h16v11H14v-5M15 24h10" fill="none" stroke="#fff" strokeWidth="3.600" strokeLinejoin="round" />
    </svg>
  );
}

function TitleBar() {
  return (
    <div className="h-[21px] flex items-center bg-[linear-gradient(90deg,#dbe7f3_0%,#e4eef8_17%,#b5cfe8_24%,#aecae5_31%,#b8d2ec_45%,#b8d2ec_58%,#a3bdd8_63%,#b8d4ee_69%,#b8d4ee_76%,#a6c4e2_90%,#b4cfe8_100%)] border-b border-[#536a82]">
      <TerminalLogo className="w-[16px] h-[16px]" />
      <Fit w={236} className="ml-[5px] mt-[1px] text-[12px]">3075847: RoboForex-FixCent - [EURUSD,M1]</Fit>
      <div className="ml-auto mr-[3px] -mt-[3px] w-[103px] h-[18px] flex rounded-b-[4px] border border-t-0 border-[#4c5d70] overflow-hidden">
        <span className="w-[27px] bg-gradient-to-b from-[#dfe9f3] to-[#a7bdd3] flex items-end justify-center pb-[4px]"><i className="w-[12px] h-[5px] bg-white border border-[#555]" /></span>
        <span className="w-[28px] border-l border-[#6a7c90] bg-gradient-to-b from-[#dfe9f3] to-[#a7bdd3] flex items-center justify-center">
          <svg width="12" height="12" fill="#fff" stroke="#555"><rect x="3.500" y=".5" width="8" height="8" /><rect x=".5" y="2.500" width="9" height="9" /><rect x="3.500" y="5.500" width="3" height="3" /></svg>
        </span>
        <span className="flex-1 border-l border-[#6b1d12] bg-gradient-to-b from-[#dd9c8c] via-[#bf3a20] to-[#d05a35] flex items-center justify-center">
          <svg width="12" height="11"><path d="M2 1.500l8 8M10 1.500l-8 8" stroke="#555" strokeWidth="4.500" /><path d="M2 1.500l8 8M10 1.500l-8 8" stroke="#fff" strokeWidth="2.700" /></svg>
        </span>
      </div>
    </div>
  );
}

const MENU: [string, number, number][] = [
  ['Файл', 29, 18], ['Вид', 21, 17], ['Вставка', 42, 18], ['Графики', 48, 18], ['Сервис', 40, 18], ['Окно', 29, 18], ['Справка', 46, 0],
];

function MenuBar() {
  return (
    <div className="h-[22px] flex items-center bg-[#f0f0f0] border-b border-[#8a8a84]">
      <svg width="16" height="16" className="ml-[4px] mr-[8px]"><g fill="#fff" stroke="#4583d8"><rect x="1.500" y="1.500" width="10" height="8" /><rect x="4.500" y="5.500" width="10" height="8" /></g><path d="M1 2.500h11M4 6.500h11" stroke="#4583d8" strokeWidth="2" /><path d="M6 9l2 3 2-3 2 3 1-3" fill="none" stroke="#4583d8" /></svg>
      {MENU.map(([label, w, gap]) => (
        <span key={label} className="flex" style={{ marginRight: gap }}><Fit w={w} className="text-[12px]">{label}</Fit></span>
      ))}
      <div className="ml-auto mr-[1px] flex gap-[1px]">
        {['M5 12h6', 'M6.500 4.500h6v5h-2M4.500 7.500h6v5h-6z', 'M6 6l6 6M12 6l-6 6'].map(d => (
          <svg key={d} width="18" height="18"><rect x=".5" y=".5" width="17" height="17" fill="#dfeaf7" stroke="#9aaabd" /><path d={d} fill="none" stroke="#65768a" strokeWidth="1.700" /></svg>
        ))}
      </div>
    </div>
  );
}

function TaskButton({ icon, label, w, className }: { icon: ReactNode; label: string; w: number; className: string }) {
  return (
    <div className={`w-[160px] h-[39px] rounded-[3px] border border-[#536579] shadow-[inset_0_0_0_1px_#d2dce6] flex items-center ${className}`}>
      {icon}
      <Fit w={w} className="text-[13px] text-white">{label}</Fit>
    </div>
  );
}

function Taskbar() {
  return (
    <div className="h-[40px] flex items-center bg-[linear-gradient(180deg,#5d7085_0,#9fb1c5_2px,#92a6bb_8px,#8a9fb6_100%)]">
      <svg width="37" height="37" viewBox="0 0 37 37" className="ml-[8px]">
        <defs><radialGradient id="orb" cy=".85"><stop stopColor="#2fd3ff" /><stop offset=".55" stopColor="#1c6ea8" /><stop offset="1" stopColor="#17446d" /></radialGradient></defs>
        <circle cx="18.500" cy="18.500" r="17.500" fill="url(#orb)" stroke="#29465f" />
        <path d="M3 13Q18-8 34 13 18 20 3 13z" fill="#fff" opacity=".3" />
        <path d="M11 10q4-4 9-1l-2 8q-4-3-9 0z" fill="#e8562a" /><path d="M21 10q4 3 9 0l-2 8q-5 3-9 0z" fill="#8cc63f" />
        <path d="M8.500 19q4-3 9 0l-2 8q-4-3-9 0z" fill="#62b5ee" /><path d="M18.500 20q5 3 9 0l-2 8q-5 3-9 0z" fill="#ffd23b" />
      </svg>
      <svg width="32" height="32" viewBox="0 0 32 32" className="ml-[28px]" shapeRendering="crispEdges">
        <path d="M2 2h30v30H2z" fill="#777" /><path d="M0 0h28l2 2v28H2l-2-2z" fill="#0000ee" stroke="#000" />
        <rect x="9" width="13" height="10" fill="#c0c0c0" /><rect x="16" y="2" width="3" height="6" fill="#0000c0" />
        <path d="M2 3h4M4 1v4M24 3v4M24 5h4M28 3v4" stroke="#ccc" />
        <rect x="4" y="14" width="22" height="11" fill="#fff" /><path d="M4 16h22M4 20h22M4 24h22" stroke="#f00" strokeWidth="2" />
        <rect x="4" y="25" width="22" height="5" fill="#f00" /><path d="M6 27h10M6 29h14" stroke="#fff" strokeDasharray="3 2" />
      </svg>
      <TaskButton className="ml-[16px] bg-gradient-to-b from-[#b6c3d0] to-[#8fa3b8]" label="[M1] SCALP.INC (..." w={102} icon={
        <svg width="30" height="30" viewBox="0 0 30 30" className="ml-[10px] mr-[5px]">
          <circle cx="15" cy="15" r="14.500" fill="#fdd04a" />
          <path d="M2.400 7.700A14.500 14.500 0 0 1 27.600 7.700L15 8.500l-5.600 10z" fill="#dd4b3e" />
          <path d="M2.400 7.700A14.500 14.500 0 0 0 14 29.500l6.500-11-11-.5z" fill="#1da462" />
          <path d="M15 8.500h12.900A14.500 14.500 0 0 1 14 29.500l7-11z" fill="#fdd04a" />
          <circle cx="15" cy="15" r="6.700" fill="#fff" /><circle cx="15" cy="15" r="5.300" fill="#4285f4" />
        </svg>
      } />
      <TaskButton className="ml-[2px] bg-gradient-to-b from-[#dce3ea] to-[#aebbca]" label="3075847: RoboFor..." w={102} icon={<TerminalLogo className="w-[32px] h-[32px] ml-[9px] mr-[4px]" />} />
      <div className="ml-auto flex items-center text-white h-full">
        <Fit w={16} className="text-[12px] mb-[4px] mr-[15px]">RU</Fit>
        <svg width="8" height="5" className="mr-[13px] mt-[2px]"><path d="M0 5l4-5 4 5z" fill="#fff" /></svg>
        <svg width="17" height="17" className="mr-[7px]"><path d="M1.500 1v15" stroke="#fff" strokeWidth="2" /><path d="M3 2h5l1 2h5v7H8l-1-2H3z" fill="#fff" stroke="#444" strokeWidth=".6" /><circle cx="11.500" cy="11.500" r="4.500" fill="#dd2c22" /><path d="M9.500 9.500l4 4M13.500 9.500l-4 4" stroke="#fff" strokeWidth="1.400" /></svg>
        <svg width="17" height="17" className="mr-[7px]"><circle cx="8.500" cy="8.500" r="8" fill="#ff9d14" /><circle cx="8.500" cy="8.500" r="3.700" fill="none" stroke="#fff" strokeWidth="2.200" /><path d="M12 8v5" stroke="#fff" strokeWidth="2" /></svg>
        <svg width="16" height="17" className="mr-[9px]"><path d="M8 2.500H2.500v13H7" fill="#7b8794" stroke="#444" strokeWidth="3" /><path d="M8 2.500H2.500v13H7" fill="none" stroke="#fff" /><path d="M6 5h9v3l-3 3H9L6 8zM8.500 2v3M12.500 2v3M10.500 11v4" fill="#fff" stroke="#fff" strokeWidth="1.300" /></svg>
        <svg width="16" height="14" className="mr-[8px]" fill="#fff" stroke="#455" strokeWidth=".5"><path d="M1 10h2v3H1zM4 8h2v5H4zM7 6h2v7H7zM10 3h2v10h-2zM13 0h2v13h-2z" /></svg>
        <svg width="16" height="16" className="mr-[17px]"><path d="M1 5h3l4-4v14l-4-4H1z" fill="#fff" stroke="#556" strokeWidth=".6" /><path d="M10 5q2 3 0 6M12 3q4 5 0 10" stroke="#fff" fill="none" strokeWidth="1.300" /></svg>
        <div className="flex flex-col items-center mr-[12px] text-[12px] leading-[17px]">
          <Fit w={27}>17:37</Fit>
          <Fit w={54}>25.03.2016</Fit>
        </div>
        <div className="w-[14px] h-[39px] border border-[#5c7086] bg-gradient-to-b from-[#c1cfdd] via-[#8fa4ba] to-[#a6b9cc]" />
      </div>
    </div>
  );
}

export default function App() {
  return (
    <div className="w-[1280px] h-[800px] overflow-hidden flex flex-col bg-white text-black font-['Noto_Sans','Open_Sans',sans-serif]">
      <TitleBar />
      <MenuBar />
      <div className="flex h-[715px] overflow-hidden">
        <Chart />
        <SidePanel />
        <Axis />
      </div>
      <div className="h-[2px] bg-white" />
      <Taskbar />
    </div>
  );
}
